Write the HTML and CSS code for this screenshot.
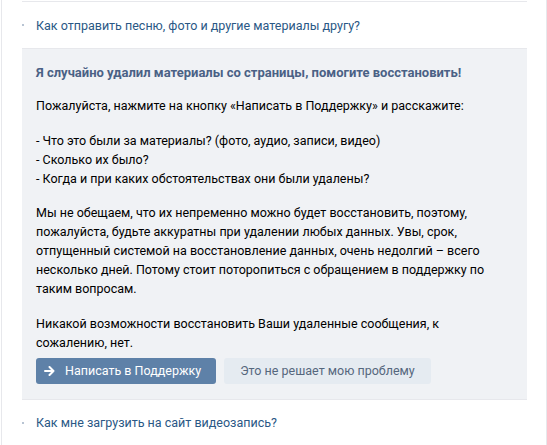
FILE: index.html
```html
<!DOCTYPE html>
<html lang="ru">
<head>
<meta charset="utf-8">
<link rel="stylesheet" href="styles.css">
</head>
<body>
<div class="page">
  <div class="faq">
    <div class="faq-item">
      <div class="question"><span class="dot"></span><a class="q-link">Как отправить песню, фото и другие материалы другу?</a></div>
    </div>
    <div class="faq-item open">
      <div class="answer">
        <div class="a-title">Я случайно удалил материалы со страницы, помогите восстановить!</div>
        <div class="a-text">
          <p>Пожалуйста, нажмите на кнопку «Написать в Поддержку» и расскажите:</p>
          <p>- Что это были за материалы? (фото, аудио, записи, видео)<br>- Сколько их было?<br>- Когда и при каких обстоятельствах они были удалены?</p>
          <p>Мы не обещаем, что их непременно можно будет восстановить, поэтому, пожалуйста, будьте аккуратны при удалении любых данных. Увы, срок, отпущенный системой на восстановление данных, очень недолгий – всего несколько дней. Потому стоит поторопиться с обращением в поддержку по таким вопросам.</p>
          <p>Никакой возможности восстановить Ваши удаленные сообщения, к сожалению, нет.</p>
        </div>
        <div class="actions">
          <button class="btn btn-primary"><svg class="arrow" width="11" height="10" viewBox="0 0 11 10"><path d="M1 5h8.5M5.5 1l4 4-4 4" fill="none" stroke="#fff" stroke-width="2" stroke-linecap="round" stroke-linejoin="round"/></svg>Написать в Поддержку</button>
          <button class="btn btn-secondary">Это не решает мою проблему</button>
        </div>
      </div>
    </div>
    <div class="faq-item last">
      <div class="question"><span class="dot"></span><a class="q-link">Как мне загрузить на сайт видеозапись?</a></div>
    </div>
  </div>
</div>
</body>
</html>
```

FILE: styles.css
```css
html, body {
  margin: 0;
  padding: 0;
  background: #fff;
}
body {
  font-family: Roboto, "Open Sans", sans-serif;
  font-size: 12.5px;
  color: #000;
}
.page {
  margin-left: 1px;
  width: 544px;
  height: 445px;
  border-left: 1px solid #e7e8ec;
  border-right: 1px solid #e7e8ec;
  box-sizing: content-box;
  padding-top: 1px;
}
.faq {
  margin: 0 19px 0 20px;
}
.faq-item {
  border-top: 1px solid #e7e8ec;
}
.faq-item.last {
  border-bottom: 1px solid #e7e8ec;
}
.question {
  height: 46px;
  display: flex;
  align-items: center;
}
.dot {
  width: 2px;
  height: 2px;
  background: #b8c4d3;
  margin-right: 12px;
  flex: none;
}
.q-link {
  color: #2a5885;
  font-size: 12.5px;
}
.answer {
  background: #f0f2f5;
  padding: 15px 16px 15px 14px;
}
.a-title {
  font-size: 13px;
  font-weight: bold;
  color: #4a6185;
  line-height: 18px;
}
.a-text p {
  margin: 15.5px 0 0;
  line-height: 19px;
}
.a-text p:first-child {
  margin-top: 14px;
}
.actions {
  display: flex;
  gap: 8px;
  margin-top: 6px;
}
.btn {
  font-family: inherit;
  font-size: 12.5px;
  border: none;
  border-radius: 3px;
  height: 26px;
  padding: 0 16px;
  display: flex;
  align-items: center;
}
.btn-primary {
  background: #5e81a8;
  color: #fff;
  padding-left: 8px;
  padding-right: 15px;
}
.arrow {
  margin-right: 10px;
}
.btn-secondary {
  background: #e5ebf1;
  color: #55677d;
}
```
